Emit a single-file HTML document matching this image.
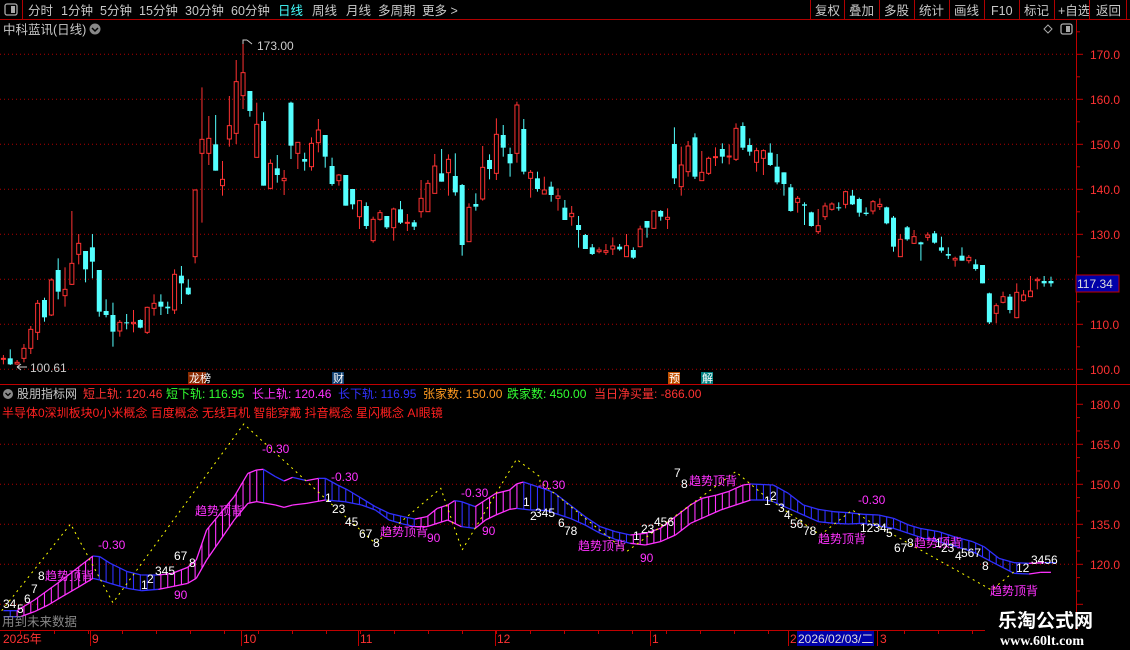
<!DOCTYPE html>
<html><head><meta charset="utf-8">
<style>
html,body{margin:0;padding:0;background:#000;width:1130px;height:650px;overflow:hidden}
svg{display:block}
text{font-family:"Liberation Sans","Noto Sans CJK SC",sans-serif}
</style></head>
<body>
<svg id="s" width="1130" height="650" viewBox="0 0 1130 650" xmlns="http://www.w3.org/2000/svg">
<rect width="1130" height="650" fill="#000"/>
<line x1="0" y1="19.5" x2="1130" y2="19.5" stroke="#b00000"/>
<line x1="22.5" y1="0" x2="22.5" y2="19" stroke="#b00000"/>
<rect x="5" y="4" width="12" height="11" rx="2" fill="none" stroke="#aaa" stroke-width="1.3"/>
<rect x="11" y="6" width="4" height="7" fill="#aaa"/>
<g font-size="12.5" fill="#c8c8c8">
<text x="28" y="15">分时</text><text x="61" y="15">1分钟</text><text x="100" y="15">5分钟</text>
<text x="139" y="15">15分钟</text><text x="185" y="15">30分钟</text><text x="231" y="15">60分钟</text>
<text x="278" y="15" fill="#4ff">日线</text><text x="312" y="15">周线</text><text x="346" y="15">月线</text>
<text x="378" y="15">多周期</text><text x="422" y="15">更多 &gt;</text>
<text x="815" y="15">复权</text><text x="849" y="15">叠加</text><text x="884" y="15">多股</text>
<text x="919" y="15">统计</text><text x="954" y="15">画线</text><text x="991" y="15">F10</text>
<text x="1024" y="15">标记</text><text x="1058" y="15">+自选</text><text x="1096" y="15">返回</text>
</g>
<g stroke="#b00000"><line x1="810.5" y1="0" x2="810.5" y2="19"/><line x1="844.5" y1="0" x2="844.5" y2="19"/><line x1="879.5" y1="0" x2="879.5" y2="19"/><line x1="914.5" y1="0" x2="914.5" y2="19"/><line x1="949.5" y1="0" x2="949.5" y2="19"/><line x1="984.5" y1="0" x2="984.5" y2="19"/><line x1="1019.5" y1="0" x2="1019.5" y2="19"/><line x1="1054.5" y1="0" x2="1054.5" y2="19"/><line x1="1089.5" y1="0" x2="1089.5" y2="19"/><line x1="1126.5" y1="0" x2="1126.5" y2="19"/></g>
<text x="3" y="34" font-size="12.5" fill="#c8c8c8">中科蓝讯(日线)</text>
<circle cx="95" cy="29" r="5.5" fill="#888"/><path d="M92 28 L95 31 L98 28" stroke="#000" stroke-width="1.5" fill="none"/>
<path d="M1048 25 L1052 29 L1048 33 L1044 29 Z" fill="none" stroke="#aaa"/>
<rect x="1061" y="24" width="11" height="10" rx="2" fill="none" stroke="#aaa" stroke-width="1.3"/><rect x="1066" y="26" width="4" height="6" fill="#aaa"/>
<line x1="1076.5" y1="19" x2="1076.5" y2="630" stroke="#c00000"/>
<line x1="0" y1="384.5" x2="1130" y2="384.5" stroke="#c00000"/>
<line x1="0" y1="630.5" x2="985" y2="630.5" stroke="#c00000"/>
<g id="dyn"></g>
<g font-size="12" fill="#ff3232">
<text x="1090" y="59">170.0</text><text x="1090" y="104">160.0</text><text x="1090" y="149">150.0</text>
<text x="1090" y="194">140.0</text><text x="1090" y="239">130.0</text><text x="1090" y="329">110.0</text>
<text x="1090" y="374">100.0</text>
<text x="1090" y="409">180.0</text><text x="1090" y="449">165.0</text><text x="1090" y="489">150.0</text>
<text x="1090" y="529">135.0</text><text x="1090" y="569">120.0</text>
</g>
<rect x="1076" y="275" width="43" height="17" fill="#0000a8" stroke="#c00000"/>
<text x="1077" y="288" font-size="12" fill="#ddd">117.34</text>
<path d="M243 44 L243 40 L247 40 M247 40 L252 44" stroke="#ccc" fill="none"/>
<text x="257" y="50" font-size="12" fill="#ccc">173.00</text>
<path d="M27 367 L17 367 M17 367 L21 364 M17 367 L21 370" stroke="#ccc" fill="none"/>
<text x="30" y="372" font-size="12" fill="#ccc">100.61</text>
<rect x="188" y="372" width="18" height="12" fill="#8a2a00"/><text x="189" y="382" font-size="11" fill="#fff">龙榜</text>
<rect x="332" y="372" width="12" height="12" fill="#104070"/><text x="333" y="382" font-size="11" fill="#fff">财</text>
<rect x="668" y="372" width="12" height="12" fill="#c05000"/><text x="669" y="382" font-size="11" fill="#fff">预</text>
<rect x="701" y="372" width="12" height="12" fill="#008080"/><text x="702" y="382" font-size="11" fill="#fff">解</text>
<circle cx="8" cy="394" r="5" fill="#888"/><path d="M5.5 393 L8 395.5 L10.5 393" stroke="#000" stroke-width="1.3" fill="none"/>
<g font-size="12">
<text x="17" y="398" fill="#c8c8c8">股朋指标网</text>
<text x="83" y="398" fill="#ff3232">短上轨: 120.46</text>
<text x="166" y="398" fill="#32ff32">短下轨: 116.95</text>
<text x="252" y="398" fill="#ff32ff">长上轨: 120.46</text>
<text x="338" y="398" fill="#3232ff">长下轨: 116.95</text>
<text x="423" y="398" fill="#ff9a20">张家数: 150.00</text>
<text x="507" y="398" fill="#32ff32">跌家数: 450.00</text>
<text x="594" y="398" fill="#ff3232">当日净买量: -866.00</text>
<text x="2" y="417" fill="#ff2020">半导体0深圳板块0小米概念 百度概念 无线耳机 智能穿戴 抖音概念 星闪概念 AI眼镜</text>
</g>
<text x="2" y="626" font-size="12.5" fill="#888">用到未来数据</text>
<g font-size="12" fill="#ff3232">
<text x="3" y="643">2025年</text><text x="92" y="643">9</text><text x="243" y="643">10</text>
<text x="360" y="643">11</text><text x="497" y="643">12</text><text x="652" y="643">1</text><text x="790" y="643">2</text><text x="880" y="643">3</text>
</g>
<g stroke="#c00000"><line x1="90.5" y1="630" x2="90.5" y2="646"/><line x1="241.5" y1="630" x2="241.5" y2="646"/><line x1="358.5" y1="630" x2="358.5" y2="646"/><line x1="495.5" y1="630" x2="495.5" y2="646"/><line x1="650.5" y1="630" x2="650.5" y2="646"/><line x1="788.5" y1="630" x2="788.5" y2="646"/><line x1="877.5" y1="630" x2="877.5" y2="646"/></g>
<rect x="797" y="631" width="77" height="15" fill="#0000a8"/>
<text x="798" y="643" font-size="12" fill="#ddd">2026/02/03/二</text>
<text x="998" y="627" font-size="19" font-weight="bold" fill="#fff">乐淘公式网</text>
<text x="1000" y="645" font-size="14" font-weight="bold" fill="#fff" style="font-family:'Liberation Serif',serif">www.60lt.com</text>
</svg>
<script>
(function(){
var L="r,985,987,975,1003;c,985,1003,958,1005;r,997,1002,990,1005;r,955,985,942,997;r,898,955,888,972;r,820,907,810,930;c,810,862,803,875;r,750,855,745,858;c,720,785,685,808;r,778,797,712,830;r,700,763,543,765;r,640,673,612,703;c,663,718,663,757;c,652,695,612,745;c,720,845,720,860;c,843,855,808,862;c,855,905,818,950;r,877,903,870,920;c,877,879,852,898;r,877,881,840,907;c,870,893,868,895;r,832,907,830,912;r,820,835,793,857;c,815,830,793,855;c,830,835,815,852;r,733,840,718,852;c,737,760,708,822;c,773,793,748,795;r,480,680,478,700;r,328,370,172,578;r,325,370,258,405;c,343,422,255,422;r,448,467,393,497;r,287,327,198,350;r,155,310,90,342;r,128,197,30,237;c,183,243,183,260;r,283,382,218,382;c,273,467,247,467;r,400,475,388,478;c,415,435,375,458;r,445,452,420,495;c,218,347,215,387;r,337,370,337,417;c,387,395,368,422;r,340,410,322,422;r,300,338,267,367;c,315,380,315,413;c,408,462,383,467;r,435,452,432,467;c,435,527,435,527;c,477,523,477,538;r,512,560,510,597;c,528,588,517,597;r,568,632,560,638;r,548,568,540,572;c,558,592,558,597;r,537,593,533,632;c,538,578,513,582;r,577,580,552,603;c,577,590,570,600;r,505,545,450,563;r,460,545,450,545;r,408,490,372,490;c,430,455,357,455;r,388,428,373,497;c,438,487,370,497;c,465,645,462,677;r,532,635,520,635;c,522,530,490,542;r,412,507,348,512;c,390,417,373,448;r,313,430,265,450;c,315,353,285,380;c,372,400,353,440;r,225,370,215,398;c,297,425,267,433;r,427,445,420,503;c,445,477,425,485;"+
"r,480,492,440,493;c,470,495,455,515;r,498,505,475,542;c,533,570,510,570;r,550,560,528,587;c,585,600,558,653;c,615,657,612,657;c,652,672,642,675;r,660,665,652,670;r,662,667,642,675;r,648,657,622,675;c,650,658,642,662;r,647,680,612,680;c,660,683,652,687;r,597,650,587,652;c,573,593,573,623;r,543,595,543,595;c,543,560,540,572;r,562,568,535,597;c,342,445,292,462;r,405,470,350,497;r,348,425,333,440;c,322,440,310,447;r,427,452,363,452;r,385,430,380,435;r,380,382,352,408;c,357,380,340,400;r,378,380,343,403;r,295,388,280,393;c,288,353,277,360;c,345,365,325,377;r,362,397,353,425;r,362,385,358,435;c,368,405,340,408;c,410,457,372,463;c,427,462,427,497;c,472,543,462,545;r,505,517,498,548;c,523,527,517,585;c,547,588,545,590;r,587,605,537,612;r,528,560,518,570;r,522,538,517,542;c,532,535,517,542;r,485,523,482,535;c,497,523,480,525;c,507,548,503,560;c,548,552,532,557;r,515,543,510,553;r,523,530,505,540;c,532,580,530,583;c,563,650,558,665;r,628,680,612,680;c,592,628,588,632;r,620,640,600,642;c,637,643,635,692;r,615,622,607,632;c,610,638,603,641;c,652,662,620,668;c,672,677,652,687;r,685,690,680,710;c,677,692,652,692;r,682,692,675,700;c,703,717,688,722;c,705,760,705,760;c,790,877,788,882;r,827,850,820,880;r,800,817,785,820;c,800,840,792,850;r,787,863,760,865;r,795,812,780,815;r,783,800,738,800;r,748,752,742,778;c,753,760,738,770;c,753,760,740,770";
var out=[];
function Y(z){return 30+z/3;}
[54.3,99.3,144.3,189.3,234.3,279.3,324.3,369.3].forEach(function(y){out.push('<line x1="0" y1="'+y+'" x2="1076" y2="'+y+'" stroke="#b00000" stroke-dasharray="1,3"/>');});
[444.3,484.3,524.3,564.3].forEach(function(y){out.push('<line x1="0" y1="'+y+'" x2="1076" y2="'+y+'" stroke="#b00000" stroke-dasharray="1,3"/>');});
out.push('<line x1="0" y1="604.3" x2="978" y2="604.3" stroke="#b00000" stroke-dasharray="1,3"/>');
for(var p=100;p<=175;p+=5){var y=369.3-(p-100)*4.5;out.push('<line x1="1076" y1="'+y+'" x2="'+(p%10?1080:1083)+'" y2="'+y+'" stroke="#c00000"/>');}
for(var v=105;v<=180;v+=5){var y=564.3-(v-120)*2.667;out.push('<line x1="1076" y1="'+y+'" x2="'+(v%15?1080:1083)+'" y2="'+y+'" stroke="#c00000"/>');}
for(var tx=20;tx<980;tx+=34){out.push('<line x1="'+tx+'.5" y1="630" x2="'+tx+'.5" y2="634" stroke="#c00000"/>');}
var A=L.split(";");
A.forEach(function(s,i){var f=s.split(","),x=3.4+i*6.847,t=Y(+f[1]),b=Y(+f[2]),h=Y(+f[3]),l=Y(+f[4]);
 if(b-t<1)b=t+1;
 if(f[0]=="r"){out.push('<line x1="'+x+'" y1="'+h+'" x2="'+x+'" y2="'+l+'" stroke="#ff3232"/>');
  out.push('<rect x="'+(x-2)+'" y="'+t+'" width="4" height="'+(b-t)+'" fill="#000" stroke="#ff3232"/>');}
 else{out.push('<line x1="'+x+'" y1="'+h+'" x2="'+x+'" y2="'+l+'" stroke="#54ffff"/>');
  out.push('<rect x="'+(x-2.5)+'" y="'+t+'" width="5" height="'+(b-t)+'" fill="#54ffff"/>');}
});
function cv(pl,pr){var r=[];pl.forEach(function(p){r.push([p[0]/2.904,420+p[1]/3]);});pr.forEach(function(p){r.push([540+p[0]/2.658,420+p[1]/3]);});return r;}
var U=cv([[10,572],[50,572],[60,565],[100,540],[140,510],[180,480],[230,440],[270,408],[290,410],[320,430],[370,455],[410,465],[460,465],[500,460],[545,442],[570,420],[600,330],[640,280],[680,230],[720,160],[745,150],[765,148],[800,170],[825,183],[850,172],[890,182],[925,175],[945,175],[980,195],[1010,210],[1050,235],[1090,260],[1130,280],[1170,290],[1205,297],[1240,290],[1270,265],[1300,255],[1320,242],[1340,245],[1380,260],[1410,240],[1440,220],[1480,210],[1500,192],[1520,186],[1560,200]],
[[20,210],[40,220],[80,255],[120,290],[160,320],[200,335],[240,345],[280,340],[320,325],[360,290],[400,255],[430,235],[470,225],[500,215],[520,205],[540,195],[560,192],[620,195],[660,220],[700,255],[740,268],[780,275],[820,278],[860,283],[900,285],[940,295],[980,315],[1010,325],[1060,335],[1100,350],[1150,365],[1180,380],[1220,415],[1260,428],[1300,430],[1340,428],[1370,428]]);
var D=cv([[10,590],[60,590],[100,575],[140,555],[180,530],[230,500],[270,475],[290,480],[320,490],[370,505],[410,512],[460,508],[500,500],[545,490],[570,475],[600,420],[640,360],[680,300],[720,250],[745,245],[800,255],[825,262],[850,255],[890,250],[945,240],[1000,245],[1050,255],[1090,270],[1130,300],[1170,312],[1205,320],[1240,320],[1300,300],[1340,320],[1380,325],[1410,300],[1440,285],[1480,268],[1500,265],[1540,270],[1560,270]],
[[20,272],[40,280],[80,295],[120,315],[160,340],[200,358],[240,370],[280,375],[320,365],[360,345],[400,310],[440,290],[480,270],[520,255],[560,240],[600,240],[620,245],[660,265],[700,285],[740,305],[780,310],[820,312],[860,310],[900,318],[940,325],[980,340],[1020,355],[1060,365],[1100,378],[1150,395],[1200,425],[1260,460],[1300,462],[1330,457],[1358,457]]);
function at(c,x){for(var i=0;i<c.length-1;i++){if(x>=c[i][0]&&x<=c[i+1][0]){var k=(x-c[i][0])/(c[i+1][0]-c[i][0]);return c[i][1]+k*(c[i+1][1]-c[i][1]);}}return null;}
function col(x){var a=at(U,x-3),b=at(U,x+3);if(a==null||b==null)return "#3030ff";return b<a?"#ff32ff":"#3030ff";}
for(var i=0;i<154;i++){var x=3.4+i*6.847;if(x>266&&x<318)continue;if(x>1020)continue;var u=at(U,x),d=at(D,x);if(u!=null&&d!=null){out.push('<line x1="'+x+'" y1="'+u+'" x2="'+x+'" y2="'+d+'" stroke="'+col(x)+'" stroke-width="1.1"/>');}}
function seg(c,isD){for(var i=0;i<c.length-1;i++){var m=(c[i][0]+c[i+1][0])/2;var k=col(m);if(isD&&m>250&&m<330)k="#ff32ff";out.push('<line x1="'+c[i][0]+'" y1="'+c[i][1]+'" x2="'+c[i+1][0]+'" y2="'+c[i+1][1]+'" stroke="'+k+'" stroke-width="1.3"/>');}}
seg(U,false);seg(D,true);
var Z=cv([[5,572],[205,312],[328,548],[708,12],[960,250],[1090,370],[1280,205],[1342,390],[1500,118],[1568,170]],[[0,185],[230,395],[520,155],[600,230],[745,345],[830,270],[870,300],[1200,510],[1260,455]]);
out.push('<polyline points="'+Z.map(function(p){return p[0].toFixed(1)+","+p[1].toFixed(1);}).join(" ")+'" fill="none" stroke="#ffff00" stroke-dasharray="2,4"/>');
var W="#fff",M="#ff32ff",T="趋势顶背";
var lab=[[3,608,"34",W],[17,613,"5",W],[24,603,"6",W],[31,593,"7",W],[38,580,"8",W],[45,580,T,M],[98,549,"-0.30",M],[141,589,"1",W],[147,583,"2",W],[155,575,"345",W],[174,599,"90",M],[174,560,"67",W],[189,567,"8",W],[195,515,T,M],[262,453,"-0.30",M],[331,481,"-0.30",M],[325,502,"1",W],[332,513,"23",W],[345,526,"45",W],[359,538,"67",W],[373,547,"8",W],[380,536,T,M],[427,542,"90",M],[461,497,"-0.30",M],[482,535,"90",M],[523,506,"1",W],[530,520,"2",W],[538,489,"-0.30",M],[535,517,"345",W],[558,527,"6",W],[564,535,"78",W],[578,550,T,M],[640,562,"90",M],[633,540,"1",W],[641,533,"23",W],[654,526,"456",W],[674,477,"7",W],[681,488,"8",W],[689,485,T,M],[764,505,"1",W],[770,500,"2",W],[778,512,"3",W],[784,519,"4",W],[790,528,"56",W],[803,535,"78",W],[818,543,T,M],[858,504,"-0.30",M],[860,532,"1234",W],[886,537,"5",W],[894,552,"67",W],[907,547,"8",W],[914,547,T,M],[935,547,"1",W],[941,552,"23",W],[955,560,"4",W],[961,557,"567",W],[982,570,"8",W],[1016,572,"12",W],[1031,564,"3456",W],[990,595,T,M]];
lab.forEach(function(l){out.push('<text x="'+l[0]+'" y="'+l[1]+'" font-size="12" fill="'+l[3]+'">'+l[2]+'</text>');});
document.getElementById("dyn").innerHTML=out.join("");
})();
</script>
</body></html>
